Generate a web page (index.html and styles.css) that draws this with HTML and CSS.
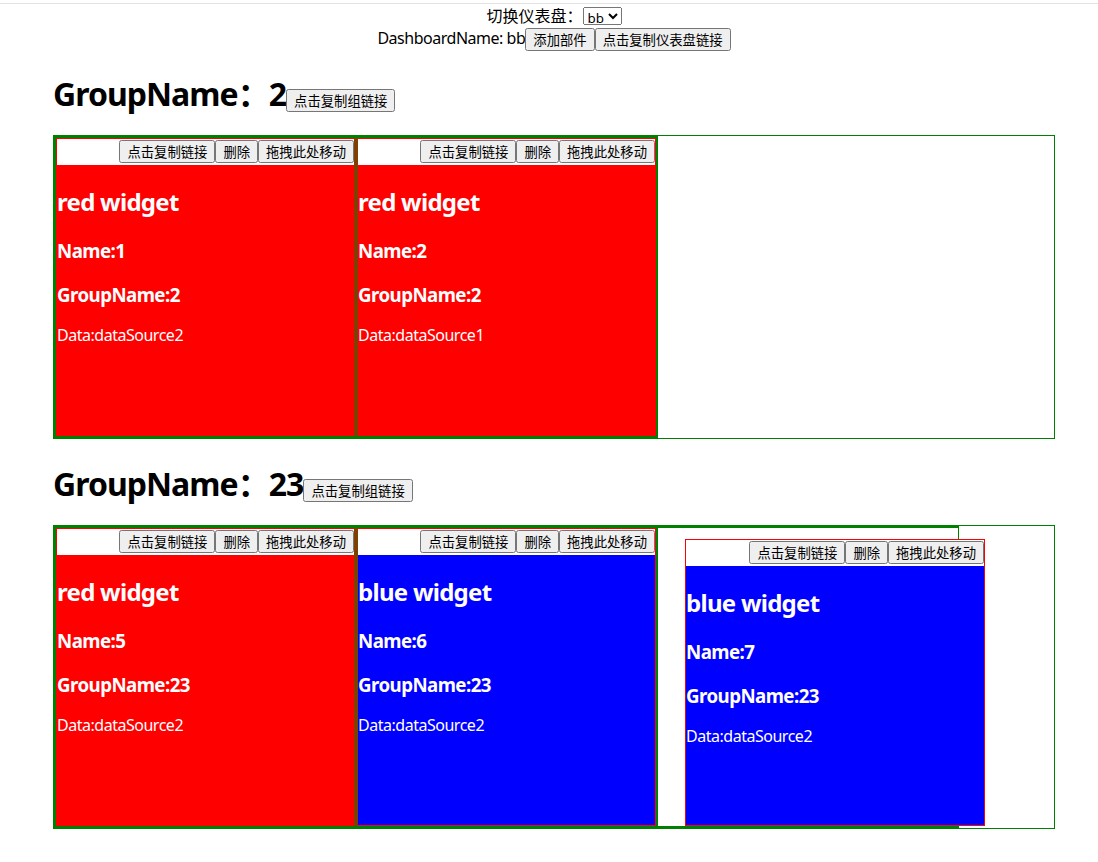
FILE: index.html
```html
<!DOCTYPE html>
<html lang="zh-CN">
<head>
<meta charset="utf-8">
<title>Dashboard</title>
<link rel="stylesheet" href="styles.css">
</head>
<body>
<div class="topline"></div>
<div class="toolbar">
  <div class="row r1">切换仪表盘：<select class="sel"><option>bb</option></select></div>
  <div class="row r2"><span class="lat">DashboardName: bb</span><button class="btn">添加部件</button><button class="btn">点击复制仪表盘链接</button></div>
</div>
<div class="groups">
  <section class="group">
    <h1 class="gtitle"><span class="lat">GroupName：2</span><button class="btn">点击复制组链接</button></h1>
    <div class="grid">
      <div class="item">
        <div class="widget">
          <div class="whead"><button class="btn">点击复制链接</button><button class="btn">删除</button><button class="btn">拖拽此处移动</button></div>
          <div class="wbody red">
            <h2 class="wt">red widget</h2>
            <h3 class="wf">Name:1</h3>
            <h3 class="wf">GroupName:2</h3>
            <p class="wd">Data:dataSource2</p>
          </div>
        </div>
      </div>
      <div class="item">
        <div class="widget">
          <div class="whead"><button class="btn">点击复制链接</button><button class="btn">删除</button><button class="btn">拖拽此处移动</button></div>
          <div class="wbody red">
            <h2 class="wt">red widget</h2>
            <h3 class="wf">Name:2</h3>
            <h3 class="wf">GroupName:2</h3>
            <p class="wd">Data:dataSource1</p>
          </div>
        </div>
      </div>
    </div>
  </section>
  <section class="group">
    <h1 class="gtitle"><span class="lat">GroupName：23</span><button class="btn">点击复制组链接</button></h1>
    <div class="grid">
      <div class="item">
        <div class="widget">
          <div class="whead"><button class="btn">点击复制链接</button><button class="btn">删除</button><button class="btn">拖拽此处移动</button></div>
          <div class="wbody red">
            <h2 class="wt">red widget</h2>
            <h3 class="wf">Name:5</h3>
            <h3 class="wf">GroupName:23</h3>
            <p class="wd">Data:dataSource2</p>
          </div>
        </div>
      </div>
      <div class="item">
        <div class="widget">
          <div class="whead"><button class="btn">点击复制链接</button><button class="btn">删除</button><button class="btn">拖拽此处移动</button></div>
          <div class="wbody blue">
            <h2 class="wt">blue widget</h2>
            <h3 class="wf">Name:6</h3>
            <h3 class="wf">GroupName:23</h3>
            <p class="wd">Data:dataSource2</p>
          </div>
        </div>
      </div>
      <div class="item placeholder">
        <div class="widget dragging">
          <div class="whead"><button class="btn">点击复制链接</button><button class="btn">删除</button><button class="btn">拖拽此处移动</button></div>
          <div class="wbody blue">
            <h2 class="wt">blue widget</h2>
            <h3 class="wf">Name:7</h3>
            <h3 class="wf">GroupName:23</h3>
            <p class="wd">Data:dataSource2</p>
          </div>
        </div>
      </div>
    </div>
  </section>
</div>
</body>
</html>
```
FILE: styles.css
```css
html, body {
  margin: 0;
  padding: 0;
  background: #fff;
}
body {
  font-family: "Noto Sans", "Noto Sans CJK SC", sans-serif;
  font-size: 16px;
  color: #000;
  padding: 7px 8px 8px;
  position: relative;
}
.lat {
  letter-spacing: -0.03em;
}
.topline {
  position: absolute;
  left: 0;
  right: 0;
  top: 3px;
  border-top: 1px solid #e3e3e3;
}
.toolbar {
  text-align: center;
  padding-left: 10px;
}
.r1 {
  line-height: 18px;
  height: 19px;
}
.r2 {
  line-height: 24px;
  height: 24px;
}
.sel {
  font-family: "Noto Sans", "Noto Sans CJK SC", sans-serif;
  font-size: 13.333px;
  height: 18px;
  padding: 0;
  vertical-align: top;
}
.btn {
  font-family: "Noto Sans CJK SC", sans-serif;
  font-size: 13.333px;
  line-height: 17px;
  padding: 1px 6px;
  margin: 0;
  vertical-align: middle;
  letter-spacing: 0;
}
.groups {
  padding-left: 45px;
}
.gtitle {
  margin: 23px 0 0;
  height: 42px;
  padding-bottom: 20px;
  font-size: 32px;
  line-height: 42px;
  font-weight: bold;
}
.group + .group .gtitle {
  margin-top: 24px;
}
.gtitle .btn {
  vertical-align: baseline;
  font-weight: normal;
}
.grid {
  width: 1002px;
  height: 304px;
  box-sizing: border-box;
  border: 1px solid green;
  display: flex;
  position: relative;
}
.item {
  width: 303px;
  height: 302px;
  box-sizing: border-box;
  border: 2px solid green;
  margin-right: -2px;
  flex: none;
  position: relative;
}
.widget {
  height: 100%;
  box-sizing: border-box;
  border: 1px solid red;
  display: flex;
  flex-direction: column;
}
.whead {
  background: #fff;
  display: flex;
  justify-content: flex-end;
  padding: 1px 0 2px;
}
.wbody {
  flex: 1;
  color: #fff;
  overflow: hidden;
}
.red { background: #ff0000; }
.blue { background: #0000ff; }
.wt, .wf, .wd {
  letter-spacing: -0.03em;
}
.wt {
  font-size: 24px;
  line-height: 32px;
  margin: 21px 0 20px;
  font-weight: bold;
}
.wf {
  font-size: 18.72px;
  line-height: 25px;
  margin: 0 0 18.72px;
  font-weight: bold;
}
.wd {
  margin: 0;
  font-size: 16px;
  line-height: 21px;
}
.placeholder {
  border-right-width: 1px;
}
.placeholder .dragging {
  position: absolute;
  left: 27px;
  top: 11px;
  width: 300px;
  height: 287px;
  border: 1px solid red;
  z-index: 2;
}
```
